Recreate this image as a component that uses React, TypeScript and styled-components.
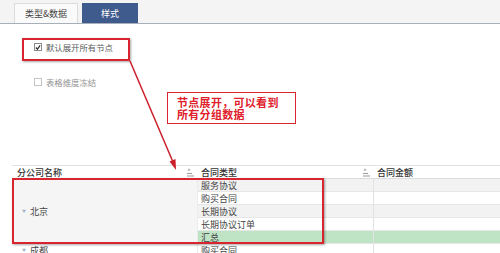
import React from "react";
import styled, { createGlobalStyle } from "styled-components";

const GlobalStyle = createGlobalStyle`
  html, body { margin: 0; padding: 0; background: #fff; }
  body { font-family: "Noto Sans CJK SC", "Noto Sans", sans-serif; }
  * { box-sizing: border-box; }
`;

const Page = styled.div`
  position: relative;
  width: 500px;
  height: 253px;
  overflow: hidden;
  background: #fff;
`;

const TabBar = styled.div`
  height: 24px;
  background: #f4f4f4;
  border-bottom: 1px solid #a7afba;
  display: flex;
  align-items: flex-end;
  gap: 4px;
  padding-left: 14px;
`;

const Tab = styled.div<{ $active?: boolean; $w: number }>`
  width: ${(p) => p.$w}px;
  height: 20px;
  display: flex;
  align-items: center;
  justify-content: center;
  font-size: 9px;
  color: ${(p) => (p.$active ? "#fff" : "#444")};
  background: ${(p) => (p.$active ? "#3f5a8d" : "#fafafa")};
  border: 1px solid ${(p) => (p.$active ? "#3f5a8d" : "#dcdcdc")};
  border-bottom: none;
`;

const Options = styled.div`
  padding: 17px 0 0 34px;
  display: flex;
  flex-direction: column;
  gap: 23px;
`;

const CheckRow = styled.label<{ $muted?: boolean }>`
  height: 12px;
  display: flex;
  align-items: center;
  gap: 4px;
  font-size: 8.4px;
  line-height: 1;
  color: ${(p) => (p.$muted ? "#939393" : "#5a5a5a")};
`;

const Box = styled.span<{ $muted?: boolean }>`
  width: 8px;
  height: 8px;
  border: 1px solid ${(p) => (p.$muted ? "#c4c4c4" : "#8d8d8d")};
  background: #fff;
  display: flex;
  align-items: center;
  justify-content: center;
`;

const Table = styled.div`
  margin: 77px 0 0 12px;
  display: grid;
  grid-template-columns: 186px 176px 1fr;
  grid-template-rows: repeat(7, 13px);
  border-top: 1px solid #e2e2e2;
`;

const HeadCell = styled.div<{ $pad?: number }>`
  display: flex;
  align-items: center;
  justify-content: space-between;
  padding-left: ${(p) => p.$pad ?? 3}px;
  padding-right: 4px;
  font-size: 9px;
  line-height: 1;
  color: #333;
  font-weight: 500;
  border-bottom: 1px solid #dcdcdc;
`;

const Cell = styled.div<{ $bg?: string; $line?: boolean }>`
  display: flex;
  align-items: center;
  padding-left: 3px;
  font-size: 9px;
  line-height: 1;
  color: #444;
  background: ${(p) => p.$bg ?? "#fff"};
  border-bottom: 1px solid #e6e6e6;
  border-right: ${(p) => (p.$line ? "1px solid #e2e2e2" : "none")};
  white-space: nowrap;
`;

const GroupCell = styled.div<{ $span: number; $bg?: string }>`
  grid-row: span ${(p) => p.$span};
  display: flex;
  align-items: center;
  gap: 4px;
  padding-left: 10px;
  font-size: 9px;
  line-height: 1;
  color: #444;
  background: ${(p) => p.$bg ?? "#fff"};
  border-bottom: 1px solid #e6e6e6;
  border-right: 1px solid #ececec;
`;

const Caret = styled.span`
  font-size: 4px;
  color: #9fb2c6;
`;

const Overlay = styled.div<{ $x: number; $y: number; $w: number; $h: number }>`
  position: absolute;
  left: ${(p) => p.$x}px;
  top: ${(p) => p.$y}px;
  width: ${(p) => p.$w}px;
  height: ${(p) => p.$h}px;
`;

const RedFrame = styled(Overlay)`
  border: 2px solid #d9252f;
  box-shadow: 1px 1px 2px rgba(0, 0, 0, 0.35);
`;

const Callout = styled(Overlay)`
  border: 1.5px solid #d9252f;
  background: #fff;
  padding: 3px 0 0 9px;
  color: #e0212b;
  font-weight: 700;
  font-size: 11px;
  line-height: 12px;
  letter-spacing: 0.3px;
  white-space: nowrap;
`;

const ArrowSvg = styled.svg`
  position: absolute;
  left: 0;
  top: 0;
  pointer-events: none;
`;

const SortIcon = () => (
  <svg width="7" height="9" viewBox="0 0 7 9">
    <path d="M2 0.5 L3.5 2.5 L0.5 2.5 Z" fill="#9a9a9a" />
    <rect x="0" y="5" width="5" height="1" fill="#9a9a9a" />
    <rect x="0" y="7.5" width="7" height="1" fill="#9a9a9a" />
  </svg>
);

const Check = () => (
  <svg width="7" height="7" viewBox="0 0 7 7">
    <path d="M1 3.5 L2.8 5.5 L6 1" stroke="#333" strokeWidth="1.4" fill="none" />
  </svg>
);

const rows = [
  { t: "服务协议", bg: "#f2f2f2" },
  { t: "购买合同", bg: "#fff" },
  { t: "长期协议", bg: "#f2f2f2" },
  { t: "长期协议订单", bg: "#fff" },
  { t: "汇总", bg: "#bfe3c5" },
];

export default function App() {
  return (
    <Page>
      <GlobalStyle />
      <TabBar>
        <Tab $w={64}>类型&amp;数据</Tab>
        <Tab $w={56} $active>
          样式
        </Tab>
      </TabBar>
      <Options>
        <CheckRow>
          <Box>
            <Check />
          </Box>
          默认展开所有节点
        </CheckRow>
        <CheckRow $muted>
          <Box $muted />
          表格维度冻结
        </CheckRow>
      </Options>
      <Table>
        <HeadCell $pad={5}>
          <span>分公司名称</span>
          <SortIcon />
        </HeadCell>
        <HeadCell>
          <span>合同类型</span>
          <SortIcon />
        </HeadCell>
        <HeadCell>
          <span>合同金额</span>
        </HeadCell>
        <GroupCell $span={5} $bg="#f5f5f5">
          <Caret>▼</Caret>北京
        </GroupCell>
        {rows.map((r) => (
          <React.Fragment key={r.t}>
            <Cell $bg={r.bg} $line>
              {r.t}
            </Cell>
            <Cell $bg={r.bg} />
          </React.Fragment>
        ))}
        <GroupCell $span={1}>
          <Caret>▼</Caret>成都
        </GroupCell>
        <Cell $line>购买合同</Cell>
        <Cell />
      </Table>

      <RedFrame $x={22} $y={38} $w={108} $h={23} />
      <RedFrame $x={12} $y={178} $w={312} $h={66} />
      <Callout $x={167} $y={92} $w={129} $h={32}>
        节点展开，可以看到
        <br />
        所有分组数据
      </Callout>
      <ArrowSvg width="500" height="253" viewBox="0 0 500 253">
        <line x1="130" y1="61" x2="173" y2="162" stroke="#cc1f2a" strokeWidth="1.5" />
        <path d="M176 170 L169.5 161.5 L175.5 159 Z" fill="#cc1f2a" />
      </ArrowSvg>
    </Page>
  );
}
